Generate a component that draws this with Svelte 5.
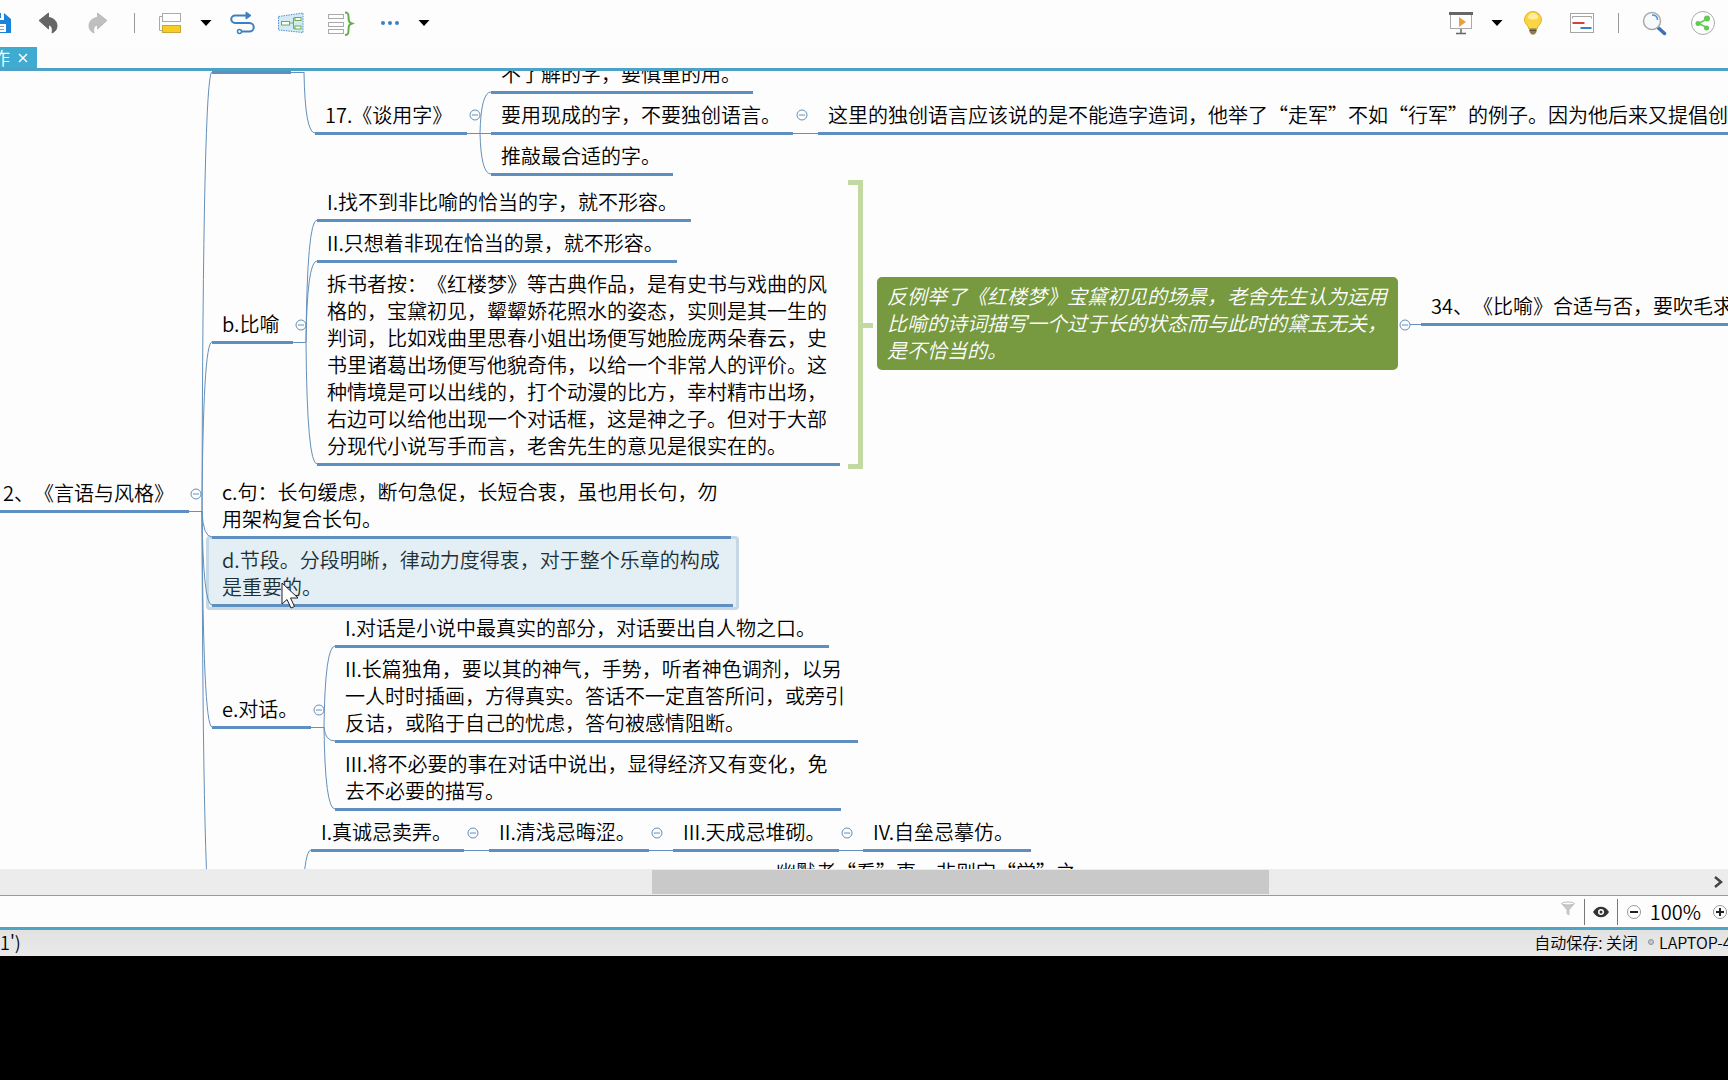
<script>
  const LINE = 27;
  const PAD = 4;

  // x: left edge, y: top of the underline, w: underline width
  const topics = [
    { x: 212, y: 0, w: 79, lines: [] },
    { x: 491, y: 20, w: 262, lines: ["不了解的字，要慎重的用。"] },
    { x: 315, y: 61, w: 152, lines: ["17.《谈用字》"] },
    { x: 491, y: 61, w: 302, lines: ["要用现成的字，不要独创语言。"] },
    { x: 491, y: 102, w: 182, lines: ["推敲最合适的字。"] },
    { x: 818, y: 61, w: 1020, lines: ["这里的独创语言应该说的是不能造字造词，他举了“走军”不如“行军”的例子。因为他后来又提倡创"] },
    { x: 317, y: 148, w: 374, lines: ["I.找不到非比喻的恰当的字，就不形容。"] },
    { x: 317, y: 189, w: 360, lines: ["II.只想着非现在恰当的景，就不形容。"] },
    { x: 317, y: 392, w: 523, lines: [
      "拆书者按：《红楼梦》等古典作品，是有史书与戏曲的风",
      "格的，宝黛初见，颦颦娇花照水的姿态，实则是其一生的",
      "判词，比如戏曲里思春小姐出场便写她脸庞两朵春云，史",
      "书里诸葛出场便写他貌奇伟，以给一个非常人的评价。这",
      "种情境是可以出线的，打个动漫的比方，幸村精市出场，",
      "右边可以给他出现一个对话框，这是神之子。但对于大部",
      "分现代小说写手而言，老舍先生的意见是很实在的。",
    ] },
    { x: 212, y: 270, w: 81, lines: ["b.比喻"] },
    { x: 1421, y: 252, w: 420, lines: ["34、《比喻》合适与否，要吹毛求"] },
    { x: -7, y: 439, w: 196, lines: ["2、《言语与风格》"] },
    { x: 212, y: 465, w: 519, lines: ["c.句：长句缓虑，断句急促，长短合衷，虽也用长句，勿", "用架构复合长句。"] },
    { x: 212, y: 533, w: 521, selected: true, lines: ["d.节段。分段明晰，律动力度得衷，对于整个乐章的构成", "是重要的。"] },
    { x: 212, y: 655, w: 99, lines: ["e.对话。"] },
    { x: 335, y: 574, w: 494, lines: ["I.对话是小说中最真实的部分，对话要出自人物之口。"] },
    { x: 335, y: 669, w: 523, lines: [
      "II.长篇独角，要以其的神气，手势，听者神色调剂，以另",
      "一人时时插画，方得真实。答话不一定直答所问，或旁引",
      "反诘，或陷于自己的忧虑，答句被感情阻断。",
    ] },
    { x: 335, y: 737, w: 506, lines: ["III.将不必要的事在对话中说出，显得经济又有变化，免", "去不必要的描写。"] },
    { x: 311, y: 778, w: 153, lines: ["I.真诚忌卖弄。"] },
    { x: 489, y: 778, w: 160, lines: ["II.清浅忌晦涩。"] },
    { x: 673, y: 778, w: 166, lines: ["III.天成忌堆砌。"] },
    { x: 863, y: 778, w: 168, lines: ["IV.自垒忌摹仿。"] },
    { x: 766, y: 818, w: 330, lines: ["幽默者“看”事，非则定“学”之"] },
  ];

  // from a parent's end point to a child's underline
  const curves = [
    [202, 440, 212, 1],
    [202, 440, 212, 271],
    [202, 440, 212, 466],
    [202, 440, 212, 534],
    [202, 440, 212, 656],
    [202, 440, 212, 855],
    [304, 1, 315, 62],
    [480, 62, 491, 21],
    [480, 62, 491, 103],
    [306, 271, 317, 149],
    [306, 271, 317, 190],
    [306, 271, 317, 393],
    [324, 656, 335, 575],
    [324, 656, 335, 670],
    [324, 656, 335, 738],
    [302, 855, 311, 779],
  ];

  const joins = [
    [291, 304, 1], [467, 491, 62], [793, 818, 62], [293, 306, 271], [189, 202, 440],
    [311, 324, 656], [464, 489, 779], [649, 673, 779], [839, 863, 779], [1410, 1421, 253],
  ];

  const toggles = [
    [475, 44], [802, 44], [301, 254], [196, 423], [319, 639],
    [473, 762], [657, 762], [847, 762], [1405, 254],
  ];

  const thumb = { left: 37.75, width: 35.7 };

  let selected = $state(topics.findIndex((t) => t.selected));
</script>

<div class="app" lang="zh-CN">
  <header class="toolbar">
    <div class="tools left">
      <button aria-label="保存">
        <svg viewBox="0 0 28 28"><path d="M2 4h17l7 6v14H2z" fill="#1d83da" /><path d="M8 4h11v7H8z" fill="#fff" /><path d="M12 4h4v5h-4z" fill="#1d83da" /><path d="M7 15h14v8H7z" fill="#fff" /><path d="M9 17.500h10M9 20.500h10" stroke="#999" /></svg>
      </button>
      <button aria-label="撤销">
        <svg viewBox="0 0 28 28"><path d="M5 11.500L14.500 4v4.500C20 9 23 12.500 23 17c0 3-1.500 5.500-5 7 1-5-.5-7.500-3.500-8v4z" fill="#666" stroke="#555" stroke-width=".8" /></svg>
      </button>
      <button aria-label="重做">
        <svg viewBox="0 0 28 28"><path d="M24 11.500L14.500 4v4.500C9 9 6 12.500 6 17c0 3 1.500 5.500 5 7-1-5 .5-7.500 3.500-8v4z" fill="#bfbfbf" stroke="#b2b2b2" stroke-width=".8" /></svg>
      </button>
      <span class="sep"></span>
      <div class="split">
        <button aria-label="插入主题">
          <svg viewBox="0 0 28 28"><path d="M5 7.500H1.500v14H5" fill="none" stroke="#aaa" /><rect x="4.500" y="4.500" width="18" height="8" fill="#fff" stroke="#aaa" /><rect x="4.500" y="16.500" width="18" height="7" fill="#f6cd22" stroke="#c9a63a" /></svg>
        </button>
        <button class="caret" aria-label="更多主题"><svg viewBox="0 0 12 8"><path d="M.5 1h11L6 7z" /></svg></button>
      </div>
      <button aria-label="联系">
        <svg viewBox="0 0 28 28" fill="none" stroke="#3c80bf" stroke-width="2"><path d="M19 6.500H6a3.500 3.500 0 0 0 0 7.500h14.500a4.200 4.200 0 0 1 0 8.500H13" /><path d="M17 3l5 3.500-5 3.500z" fill="#3c80bf" stroke-width="1" /><circle cx="10.500" cy="22.500" r="2" fill="#fff" stroke-width="1.500" /></svg>
      </button>
      <button aria-label="外框">
        <svg viewBox="0 0 28 28"><path d="M.5 7.500L25 4v19.500L.5 21z" fill="#d3eaf5" stroke="#4f91c8" stroke-dasharray="1.500 1" /><g fill="#fff" stroke="#65b04d"><path d="M11 14h4.500m1.500-5h-1.500v10.500H17" fill="none" /><rect x="3.500" y="12.500" width="8" height="3.500" /><rect x="17" y="8.500" width="6" height="3" /><rect x="17" y="17" width="6" height="3" /></g></svg>
      </button>
      <button aria-label="概要">
        <svg viewBox="0 0 28 28" fill="none"><g stroke="#aaa" fill="#fff"><rect x="1.500" y="5.500" width="15" height="4" /><rect x="1.500" y="13.500" width="15" height="4" /><rect x="1.500" y="20.500" width="15" height="4" /></g><path d="M18 3.500c3 0 3.500 1 3.500 4 0 5 .5 6 3.500 7-3 1-3.500 2-3.500 7 0 3-.5 4.500-3.500 4.500" stroke="#65b04d" stroke-width="2" /></svg>
      </button>
      <div class="split">
        <button aria-label="更多">
          <svg viewBox="0 0 28 28" fill="#3c80bf"><circle cx="7" cy="14" r="2" /><circle cx="14" cy="14" r="2" /><circle cx="21" cy="14" r="2" /></svg>
        </button>
        <button class="caret" aria-label="更多选项"><svg viewBox="0 0 12 8"><path d="M.5 1h11L6 7z" /></svg></button>
      </div>
    </div>

    <div class="tools right">
      <div class="split">
        <button aria-label="演示">
          <svg viewBox="0 0 28 28"><rect x="1.500" y="5" width="21" height="14.500" fill="#fff" stroke="#aaa" /><path d="M0 3h24v3H0z" fill="#666" /><path d="M10 8l7 5-7 5z" fill="#e9a13c" /><path d="M12 20v4M7 24.500h10" stroke="#666" stroke-width="1.500" /></svg>
        </button>
        <button class="caret" aria-label="演示选项"><svg viewBox="0 0 12 8"><path d="M.5 1h11L6 7z" /></svg></button>
      </div>
      <button aria-label="头脑风暴">
        <svg viewBox="0 0 28 28"><path d="M13 2.500a8.500 8.500 0 0 0-8.500 8.500c0 4 4.500 6 4.500 9h8c0-3 4.500-5 4.500-9A8.500 8.500 0 0 0 13 2.500z" fill="#fbd643" stroke="#ddb12a" /><path d="M8 9c0-3 2.500-5 5-5s5 2 5 5c-2 2-8 2-10 0z" fill="#ffed9c" /><path d="M9.500 19.500h7v3.500l-2 2.500h-3l-2-2.500z" fill="#8c7b53" /><path d="M9.500 21.500h7" stroke="#55503f" /></svg>
      </button>
      <button aria-label="甘特图">
        <svg viewBox="0 0 28 28" fill="none"><rect x="1.500" y="4.500" width="23" height="19" fill="#fff" stroke="#a5a5a5" /><path d="M3.500 9.500v-2h19v2" stroke="#a5a5a5" /><path d="M3.500 14h12" stroke="#d2403f" stroke-width="2" /><path d="M11.500 19h11" stroke="#3c80bf" stroke-width="2" /></svg>
      </button>
      <span class="sep"></span>
      <button aria-label="搜索">
        <svg viewBox="0 0 28 28" fill="none"><path d="M18.500 19l6 5.500" stroke="#3c73b4" stroke-width="3.500" stroke-linecap="round" /><circle cx="12" cy="12" r="8.500" fill="#f6fafd" stroke="#aaa" stroke-width="1.500" /><path d="M12 6c3.500 0 5.500 2 5.500 5" stroke="#4f91d8" stroke-width="1.500" /></svg>
      </button>
      <button aria-label="分享">
        <svg viewBox="0 0 28 28"><circle cx="14" cy="14" r="11.500" fill="#fff" stroke="#aaa" /><path d="M18 10L9.500 14.500l8.500 4" fill="none" stroke="#62c955" stroke-width="1.500" /><g fill="#62c955"><circle cx="18" cy="9.500" r="3" /><circle cx="9" cy="14.500" r="2.500" /><circle cx="17.500" cy="19" r="2.500" /></g></svg>
      </button>
    </div>
  </header>

  <nav class="tabs">
    <div class="tab"><span class="name">作</span><button aria-label="关闭标签"><svg viewBox="0 0 10 10"><path d="M1 1l8 8M9 1L1 9" stroke="#fff" stroke-width="1.500" /></svg></button></div>
  </nav>

  <main class="canvas">
    <svg class="wires" aria-hidden="true">
      {#each curves as [x1, y1, x2, y2]}
        <path d={`M${x1} ${y1}Q${x1 + 1} ${y2} ${x2} ${y2}`} />
      {/each}
      {#each joins as [x1, x2, y]}
        <path d={`M${x1} ${y + 0.5}H${x2}`} />
      {/each}
      {#each toggles as [x, y]}
        <circle cx={x} cy={y} r="5" /><path d={`M${x - 3} ${y}h6`} />
      {/each}
      <path class="bracket" d="M848 111.500H860.500V395.500H848M860 254.500H873" />
    </svg>

    {#each topics as topic, i}
      <!-- svelte-ignore a11y_click_events_have_key_events, a11y_no_static_element_interactions -->
      <div
        class="topic"
        class:selected={i === selected}
        style={`left:${topic.x}px;top:${topic.y - (topic.lines.length ? topic.lines.length * LINE + PAD : 0)}px;width:${topic.w}px`}
        onclick={() => (selected = i)}
      >
        {#if topic.lines.length}<p>{topic.lines.join("\n")}</p>{/if}
      </div>
    {/each}

    <div class="summary">
      <p>{"反例举了《红楼梦》宝黛初见的场景，老舍先生认为运用\n比喻的诗词描写一个过于长的状态而与此时的黛玉无关，\n是不恰当的。"}</p>
    </div>

    <svg class="pointer" viewBox="0 0 20 28"><path d="M1 1v21l5-4.500 4 8.500 3.500-1.500-4-8.500H17z" fill="#fff" stroke="#222" /></svg>
  </main>

  <div class="scroll">
    <div class="thumb" style={`margin-left:${thumb.left}%;width:${thumb.width}%`}></div>
    <button aria-label="向右滚动"><svg viewBox="0 0 12 12"><path d="M2 1l6 5-6 5" fill="none" stroke="#444" stroke-width="2.500" /></svg></button>
  </div>

  <div class="zoombar">
    <button class="filter" aria-label="筛选"><svg viewBox="0 0 16 16"><path d="M1 2.500h14L9.500 9v5.500L6.500 13V9z" fill="#c8c8c8" /><ellipse cx="8" cy="2.500" rx="6" ry="1.500" fill="#fff" stroke="#bbb" /></svg></button>
    <span class="bar"></span>
    <button aria-label="显示"><svg viewBox="0 0 16 16"><path d="M0 8c4-7 12-7 16 0-4 7-12 7-16 0z" fill="#333" /><circle cx="8" cy="8" r="3" fill="#fff" /><circle cx="8" cy="8" r="1.500" fill="#333" /></svg></button>
    <span class="bar"></span>
    <button aria-label="缩小"><svg viewBox="0 0 16 16"><circle cx="8" cy="8" r="6.500" fill="#fff" stroke="#999" /><path d="M4 8h8" stroke="#222" stroke-width="2" /></svg></button>
    <span class="percent">100%</span>
    <button aria-label="放大"><svg viewBox="0 0 16 16"><circle cx="8" cy="8" r="6.500" fill="#fff" stroke="#999" /><path d="M4 8h8M8 4v8" stroke="#222" stroke-width="2" /></svg></button>
  </div>

  <footer class="status">
    <span class="info">1')</span>
    <span class="save">自动保存: 关闭</span>
    <i class="dot"></i>
    <span class="host">LAPTOP-4</span>
  </footer>
</div>

<style>
  :global(body) {
    margin: 0;
    background: #000;
  }

  .app {
    display: flex;
    flex-direction: column;
    box-sizing: border-box;
    height: 100vh;
    padding-bottom: 124px;
    overflow: hidden;
    font-family: "Noto Sans CJK SC", sans-serif;
    font-weight: 350;
    color: #000;
    text-spacing-trim: space-all;
  }

  button {
    display: block;
    flex: none;
    padding: 0;
    border: 0;
    background: none;
  }
  svg {
    display: block;
  }
  p {
    margin: 0;
    white-space: pre;
  }

  .toolbar {
    display: flex;
    justify-content: space-between;
    box-sizing: border-box;
    height: 47px;
    padding-bottom: 2px;
    background: #fdfdfd;
  }
  .tools {
    display: flex;
    align-items: center;
    gap: 21px;
  }
  .left {
    margin-left: -15px;
  }
  .left .sep {
    margin: 0 2px;
  }
  .right {
    margin-right: 11px;
  }
  .tools button {
    width: 28px;
  }
  .split {
    display: flex;
    align-items: center;
    gap: 14px;
    margin-right: -4px;
  }
  .tools .caret {
    width: 12px;
  }
  .sep {
    width: 1px;
    height: 20px;
    background: #999;
  }

  .tabs {
    height: 21px;
    background: #fcfcfc;
    border-bottom: 3px solid #4ba2c6;
  }
  .tab {
    display: flex;
    align-items: center;
    gap: 8px;
    width: 37px;
    height: 21px;
    background: #3fabd0;
    color: #fff;
  }
  .name {
    display: flex;
    justify-content: flex-end;
    width: 10px;
    overflow: hidden;
    font-size: 18px;
    line-height: 21px;
  }
  .tab button {
    width: 10px;
  }

  .canvas {
    position: relative;
    z-index: 0;
    flex: 1;
    overflow: hidden;
    background: #fdfdfd;
  }
  .wires {
    position: absolute;
    width: 100%;
    height: 100%;
    fill: none;
    stroke: #6490bb;
  }
  .bracket {
    stroke: #c3d9a2;
    stroke-width: 5;
  }

  .topic {
    position: absolute;
    border-bottom: 3px solid #5f8fc0;
    font-size: 20px;
    line-height: 27px;
  }
  .topic p {
    padding: 0 0 4px 10px;
  }
  .selected {
    color: #1c3036;
  }
  .selected::before {
    content: "";
    position: absolute;
    inset: -10px -6px -6px -6px;
    z-index: -1;
    border: 3px solid #c6d8e5;
    border-radius: 4px;
    background: #e3eff4;
  }

  .summary {
    position: absolute;
    left: 877px;
    top: 206px;
    width: 521px;
    padding: 5px 10px 7px;
    box-sizing: border-box;
    border-radius: 5px;
    background: #77993f;
    color: #fff;
    font-size: 20px;
    font-style: italic;
    line-height: 27px;
  }

  .pointer {
    position: absolute;
    left: 281px;
    top: 511px;
    width: 20px;
  }

  .scroll {
    display: flex;
    align-items: center;
    height: 26px;
    border-bottom: 1px solid #999;
    background: #ececec;
  }
  .thumb {
    height: 24px;
    background: #c9c9c9;
  }
  .scroll button {
    width: 12px;
    margin-left: auto;
    margin-right: 3px;
  }

  .zoombar {
    display: flex;
    align-items: center;
    justify-content: flex-end;
    gap: 8px;
    height: 31px;
    background: #fdfdfd;
    border-bottom: 3px solid #4fa6c0;
  }
  .zoombar button {
    width: 16px;
  }
  .zoombar .filter {
    margin-bottom: 6px;
  }
  .bar {
    width: 1px;
    height: 26px;
    background: #777;
  }
  .percent {
    padding-right: 3px;
    font-size: 20px;
    line-height: 27px;
  }

  .status {
    display: flex;
    align-items: center;
    box-sizing: border-box;
    height: 26px;
    padding-bottom: 2px;
    background: linear-gradient(#e2e2e2, #eaeaea);
    font-size: 16px;
    line-height: 24px;
    white-space: nowrap;
  }
  .info {
    font-size: 18px;
  }
  .save {
    margin-left: auto;
  }
  .dot {
    width: 4px;
    height: 4px;
    margin: 0 5px 0 10px;
    border: 1px solid #8a93a0;
    border-radius: 50%;
    background: #c4c8ce;
  }
  .host {
    width: 69px;
    overflow: hidden;
  }
</style>
